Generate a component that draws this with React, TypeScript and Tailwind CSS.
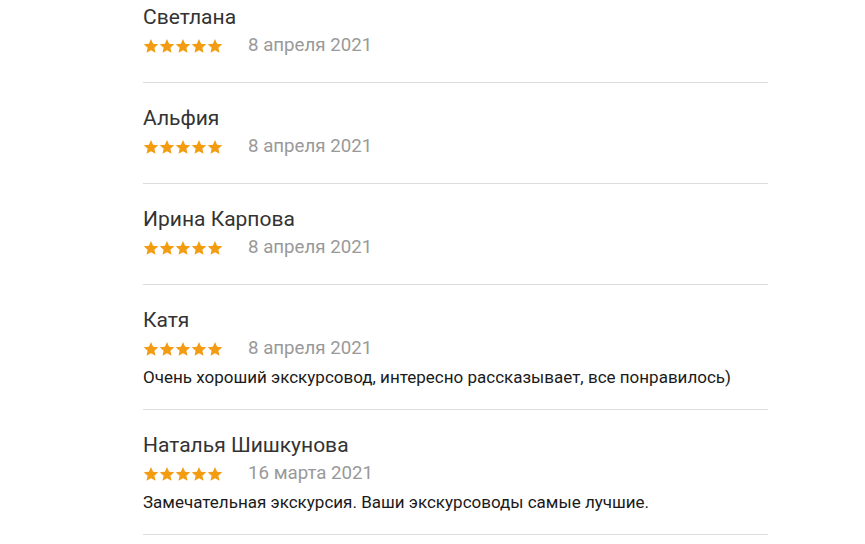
const reviews = [
  { name: "Светлана", date: "8 апреля 2021", text: "" },
  { name: "Альфия", date: "8 апреля 2021", text: "" },
  { name: "Ирина Карпова", date: "8 апреля 2021", text: "" },
  {
    name: "Катя",
    date: "8 апреля 2021",
    text: "Очень хороший экскурсовод, интересно рассказывает, все понравилось)",
  },
  {
    name: "Наталья Шишкунова",
    date: "16 марта 2021",
    text: "Замечательная экскурсия. Ваши экскурсоводы самые лучшие.",
  },
];

function Star() {
  return (
    <svg width="16" height="16" viewBox="0 0 24 24" className="fill-[#f39c12]">
      <path d="M12 1.5l3.1 7.2 7.8.7-5.9 5.2 1.8 7.7L12 18.2l-6.8 4.1 1.8-7.7L1.1 9.4l7.8-.7z" />
    </svg>
  );
}

export default function App() {
  return (
    <div className="min-h-[544px] bg-white font-['Roboto',sans-serif] overflow-hidden">
      <div className="ml-[143px] w-[625px] -mt-[18px]">
        {reviews.map((r, i) => (
          <div
            key={i}
            className={`border-b border-[#dcdcdc] pt-[21px] ${r.text ? "pb-[17px]" : "pb-[22px]"}`}
          >
            <div className="text-[21px] leading-[28px] text-[#333]">{r.name}</div>
            <div className="flex items-center h-[29px]">
              <div className="flex w-[105px]">
                <Star />
                <Star />
                <Star />
                <Star />
                <Star />
              </div>
              <span className="text-[18.7px] text-[#999]">{r.date}</span>
            </div>
            {r.text && (
              <p className="text-[17px] leading-[29px] text-[#1a1a1a]">{r.text}</p>
            )}
          </div>
        ))}
      </div>
    </div>
  );
}
